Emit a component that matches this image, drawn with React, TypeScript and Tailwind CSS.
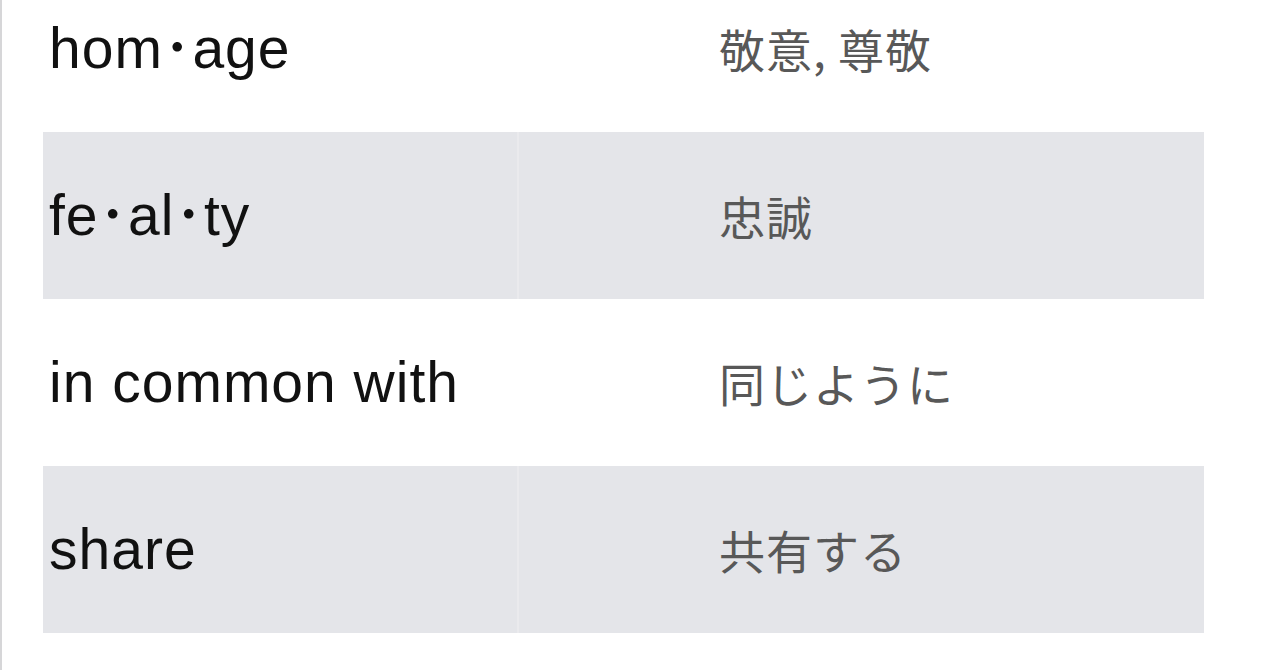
const rows = [
  { word: 'hom･age', meaning: '敬意, 尊敬' },
  { word: 'fe･al･ty', meaning: '忠誠' },
  { word: 'in common with', meaning: '同じように' },
  { word: 'share', meaning: '共有する' },
];

export default function App() {
  return (
    <div className="h-[670px] overflow-hidden bg-white border-l-2 border-[#d6d6d8]">
      {/* Vocabulary table, scrolled so the first row is cut off */}
      <table className="-mt-[35px] ml-[41px] w-[1161px] border-collapse table-fixed">
        <tbody>
          {rows.map((row, i) => (
            <tr key={row.word} className={i % 2 === 1 ? 'bg-[#e4e5e9]' : 'bg-white'}>
              <td
                className="h-[167px] w-[475px] pl-[6px] align-middle text-[57px] tracking-[1px] text-[#111111] whitespace-nowrap"
                style={{ fontFamily: '"Liberation Sans", "Noto Sans CJK JP", sans-serif' }}
              >
                {row.word}
              </td>
              <td
                className={`h-[167px] pl-[200px] align-middle text-[46px] tracking-[1px] text-[#585858] border-l-2 ${
                  i % 2 === 1 ? 'border-[#eaeaed]' : 'border-white'
                }`}
                style={{ fontFamily: '"Noto Sans CJK JP", sans-serif' }}
              >
                {row.meaning}
              </td>
            </tr>
          ))}
        </tbody>
      </table>
    </div>
  );
}
